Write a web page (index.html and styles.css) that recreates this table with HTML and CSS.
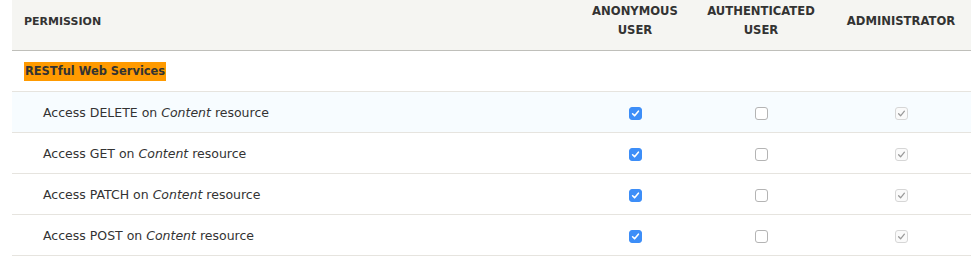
FILE: index.html
```html
<!DOCTYPE html>
<html>
<head>
<meta charset="utf-8">
<link rel="stylesheet" href="styles.css">
</head>
<body>
<div class="wrap">
<table class="perms">
  <colgroup>
    <col class="c-name"><col class="c-anon"><col class="c-auth"><col class="c-admin">
  </colgroup>
  <thead>
    <tr>
      <th class="h-name">Permission</th>
      <th class="h-role">Anonymous<br>user</th>
      <th class="h-role">Authenticated<br>user</th>
      <th class="h-role">Administrator</th>
    </tr>
  </thead>
  <tbody>
    <tr class="module">
      <td colspan="4"><span class="module-name">RESTful Web Services</span></td>
    </tr>
    <tr class="hover">
      <td class="perm">Access DELETE on <em>Content</em> resource</td>
      <td class="cb"><span class="box checked"><svg viewBox="0 0 13 13"><path d="M3.6 6.8 L5.6 8.8 L9.4 4.2"/></svg></span></td>
      <td class="cb"><span class="box"></span></td>
      <td class="cb"><span class="box disabled"><svg viewBox="0 0 13 13"><path d="M3.6 6.8 L5.6 8.8 L9.4 4.2"/></svg></span></td>
    </tr>
    <tr>
      <td class="perm">Access GET on <em>Content</em> resource</td>
      <td class="cb"><span class="box checked"><svg viewBox="0 0 13 13"><path d="M3.6 6.8 L5.6 8.8 L9.4 4.2"/></svg></span></td>
      <td class="cb"><span class="box"></span></td>
      <td class="cb"><span class="box disabled"><svg viewBox="0 0 13 13"><path d="M3.6 6.8 L5.6 8.8 L9.4 4.2"/></svg></span></td>
    </tr>
    <tr>
      <td class="perm">Access PATCH on <em>Content</em> resource</td>
      <td class="cb"><span class="box checked"><svg viewBox="0 0 13 13"><path d="M3.6 6.8 L5.6 8.8 L9.4 4.2"/></svg></span></td>
      <td class="cb"><span class="box"></span></td>
      <td class="cb"><span class="box disabled"><svg viewBox="0 0 13 13"><path d="M3.6 6.8 L5.6 8.8 L9.4 4.2"/></svg></span></td>
    </tr>
    <tr>
      <td class="perm">Access POST on <em>Content</em> resource</td>
      <td class="cb"><span class="box checked"><svg viewBox="0 0 13 13"><path d="M3.6 6.8 L5.6 8.8 L9.4 4.2"/></svg></span></td>
      <td class="cb"><span class="box"></span></td>
      <td class="cb"><span class="box disabled"><svg viewBox="0 0 13 13"><path d="M3.6 6.8 L5.6 8.8 L9.4 4.2"/></svg></span></td>
    </tr>
  </tbody>
</table>
</div>
</body>
</html>
```
FILE: styles.css
```css
html, body {
  margin: 0;
  padding: 0;
  background: #fff;
}
body {
  font-family: "DejaVu Sans", "Liberation Sans", sans-serif;
  color: #333;
}
.wrap {
  padding-left: 12px;
}
.perms {
  width: 959px;
  table-layout: fixed;
  border-collapse: collapse;
  border-spacing: 0;
}
.c-name { width: 567px; }
.c-anon { width: 112px; }
.c-auth { width: 140px; }
.c-admin { width: 140px; }

.perms thead th {
  background: #f5f5f2;
  height: 38px;
  padding: 2px 6px 10px;
  font-size: 11.6px;
  font-weight: bold;
  line-height: 19px;
  text-transform: uppercase;
  color: #333;
  border-bottom: 1px solid #bfbfba;
  vertical-align: middle;
}
.perms thead th.h-name {
  text-align: left;
  padding-left: 12px;
  font-size: 11px;
}
.h-role { text-align: center; }

.perms tbody td {
  height: 40px;
  padding: 0 12px;
  border-bottom: 1px solid #e6e4df;
  vertical-align: middle;
  box-sizing: border-box;
}
.perms tbody tr { height: 41px; }
.module td {
  font-size: 11.45px;
  font-weight: bold;
}
.module-name {
  background: #ff9a00;
  padding: 2px 1px 3px;
  line-height: 16px;
}
.hover td { background: #f7fcff; }
.perm {
  padding-left: 31px !important;
  font-size: 12.5px;
  color: #333;
}
.perm em { font-style: italic; }
.cb { text-align: center; }
.box {
  display: inline-block;
  width: 13px;
  height: 13px;
  box-sizing: border-box;
  border: 1px solid #b4b4b4;
  border-radius: 3px;
  background: #fff;
  vertical-align: middle;
}
.box svg {
  display: block;
  width: 13px;
  height: 13px;
  margin: -1px;
}
.box svg path {
  fill: none;
  stroke-width: 1.6;
  stroke-linecap: round;
  stroke-linejoin: round;
}
.box.checked {
  background: #3d8ef8;
  border-color: #3d8ef8;
}
.box.checked svg path { stroke: #fff; }
.box.disabled {
  border-color: #d6d6d6;
  background: #fafafa;
}
.box.disabled svg path { stroke: #9a9a9a; stroke-width: 1.3; }
```
